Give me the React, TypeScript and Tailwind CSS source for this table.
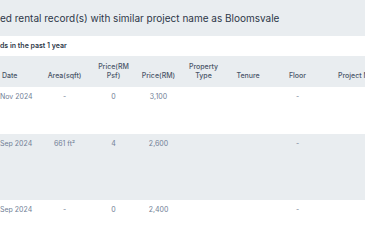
import React from 'react';

type Row = {
  date: string;
  area: string;
  psf: string;
  price: string;
  type: string;
  tenure: string;
  floor: string;
  project: string;
  h: string;
  bg: string;
};

const rows: Row[] = [
  { date: 'Nov 2024', area: '-', psf: '0', price: '3,100', type: '', tenure: '', floor: '-', project: '', h: 'h-[47px]', bg: 'bg-white' },
  { date: 'Sep 2024', area: '661 ft²', psf: '4', price: '2,600', type: '', tenure: '', floor: '-', project: '', h: 'h-[66px]', bg: 'bg-[#e9edf0]' },
  { date: 'Sep 2024', area: '-', psf: '0', price: '2,400', type: '', tenure: '', floor: '-', project: '', h: 'h-[47px]', bg: 'bg-white' },
];

const cols = 'grid grid-cols-[38px_53px_45px_45px_45px_44px_55px_90px]';

export default function App() {
  return (
    <div className="w-[365px] h-[243px] overflow-hidden bg-white font-['Inter',sans-serif]">
      {/* title bar */}
      <div className="h-[36px] bg-[#e9edf0] flex items-center">
        <h2 className="text-[10px] text-[#2d3748] whitespace-nowrap">
          ed rental record(s) with similar project name as Bloomsvale
        </h2>
      </div>

      <div className="h-[20px] flex items-center">
        <p className="text-[7px] font-semibold text-[#2d3748] whitespace-nowrap">ds in the past 1 year</p>
      </div>

      {/* table head */}
      <div className={`${cols} h-[31px] bg-[#e9edf0] items-end pb-[7px] text-[7px] leading-[9px] font-medium text-[#4a5568] whitespace-nowrap`}>
        <div className="pl-[2px]">Date</div>
        <div className="text-center">Area(sqft)</div>
        <div className="text-center">Price(RM<br />Psf)</div>
        <div className="text-center">Price(RM)</div>
        <div className="text-center">Property<br />Type</div>
        <div className="text-center">Tenure</div>
        <div className="text-center">Floor</div>
        <div className="pl-[13px]">Project Name</div>
      </div>

      {rows.map((r, i) => (
        <div key={i} className={`${cols} ${r.h} ${r.bg} items-start pt-[4px] text-[7px] leading-[12px] text-[#718096] whitespace-nowrap`}>
          <div>{r.date}</div>
          <div className="text-center">{r.area}</div>
          <div className="text-center">{r.psf}</div>
          <div className="text-center">{r.price}</div>
          <div className="text-center">{r.type}</div>
          <div className="text-center">{r.tenure}</div>
          <div className="text-center">{r.floor}</div>
          <div className="pl-[13px]">{r.project}</div>
        </div>
      ))}
    </div>
  );
}
